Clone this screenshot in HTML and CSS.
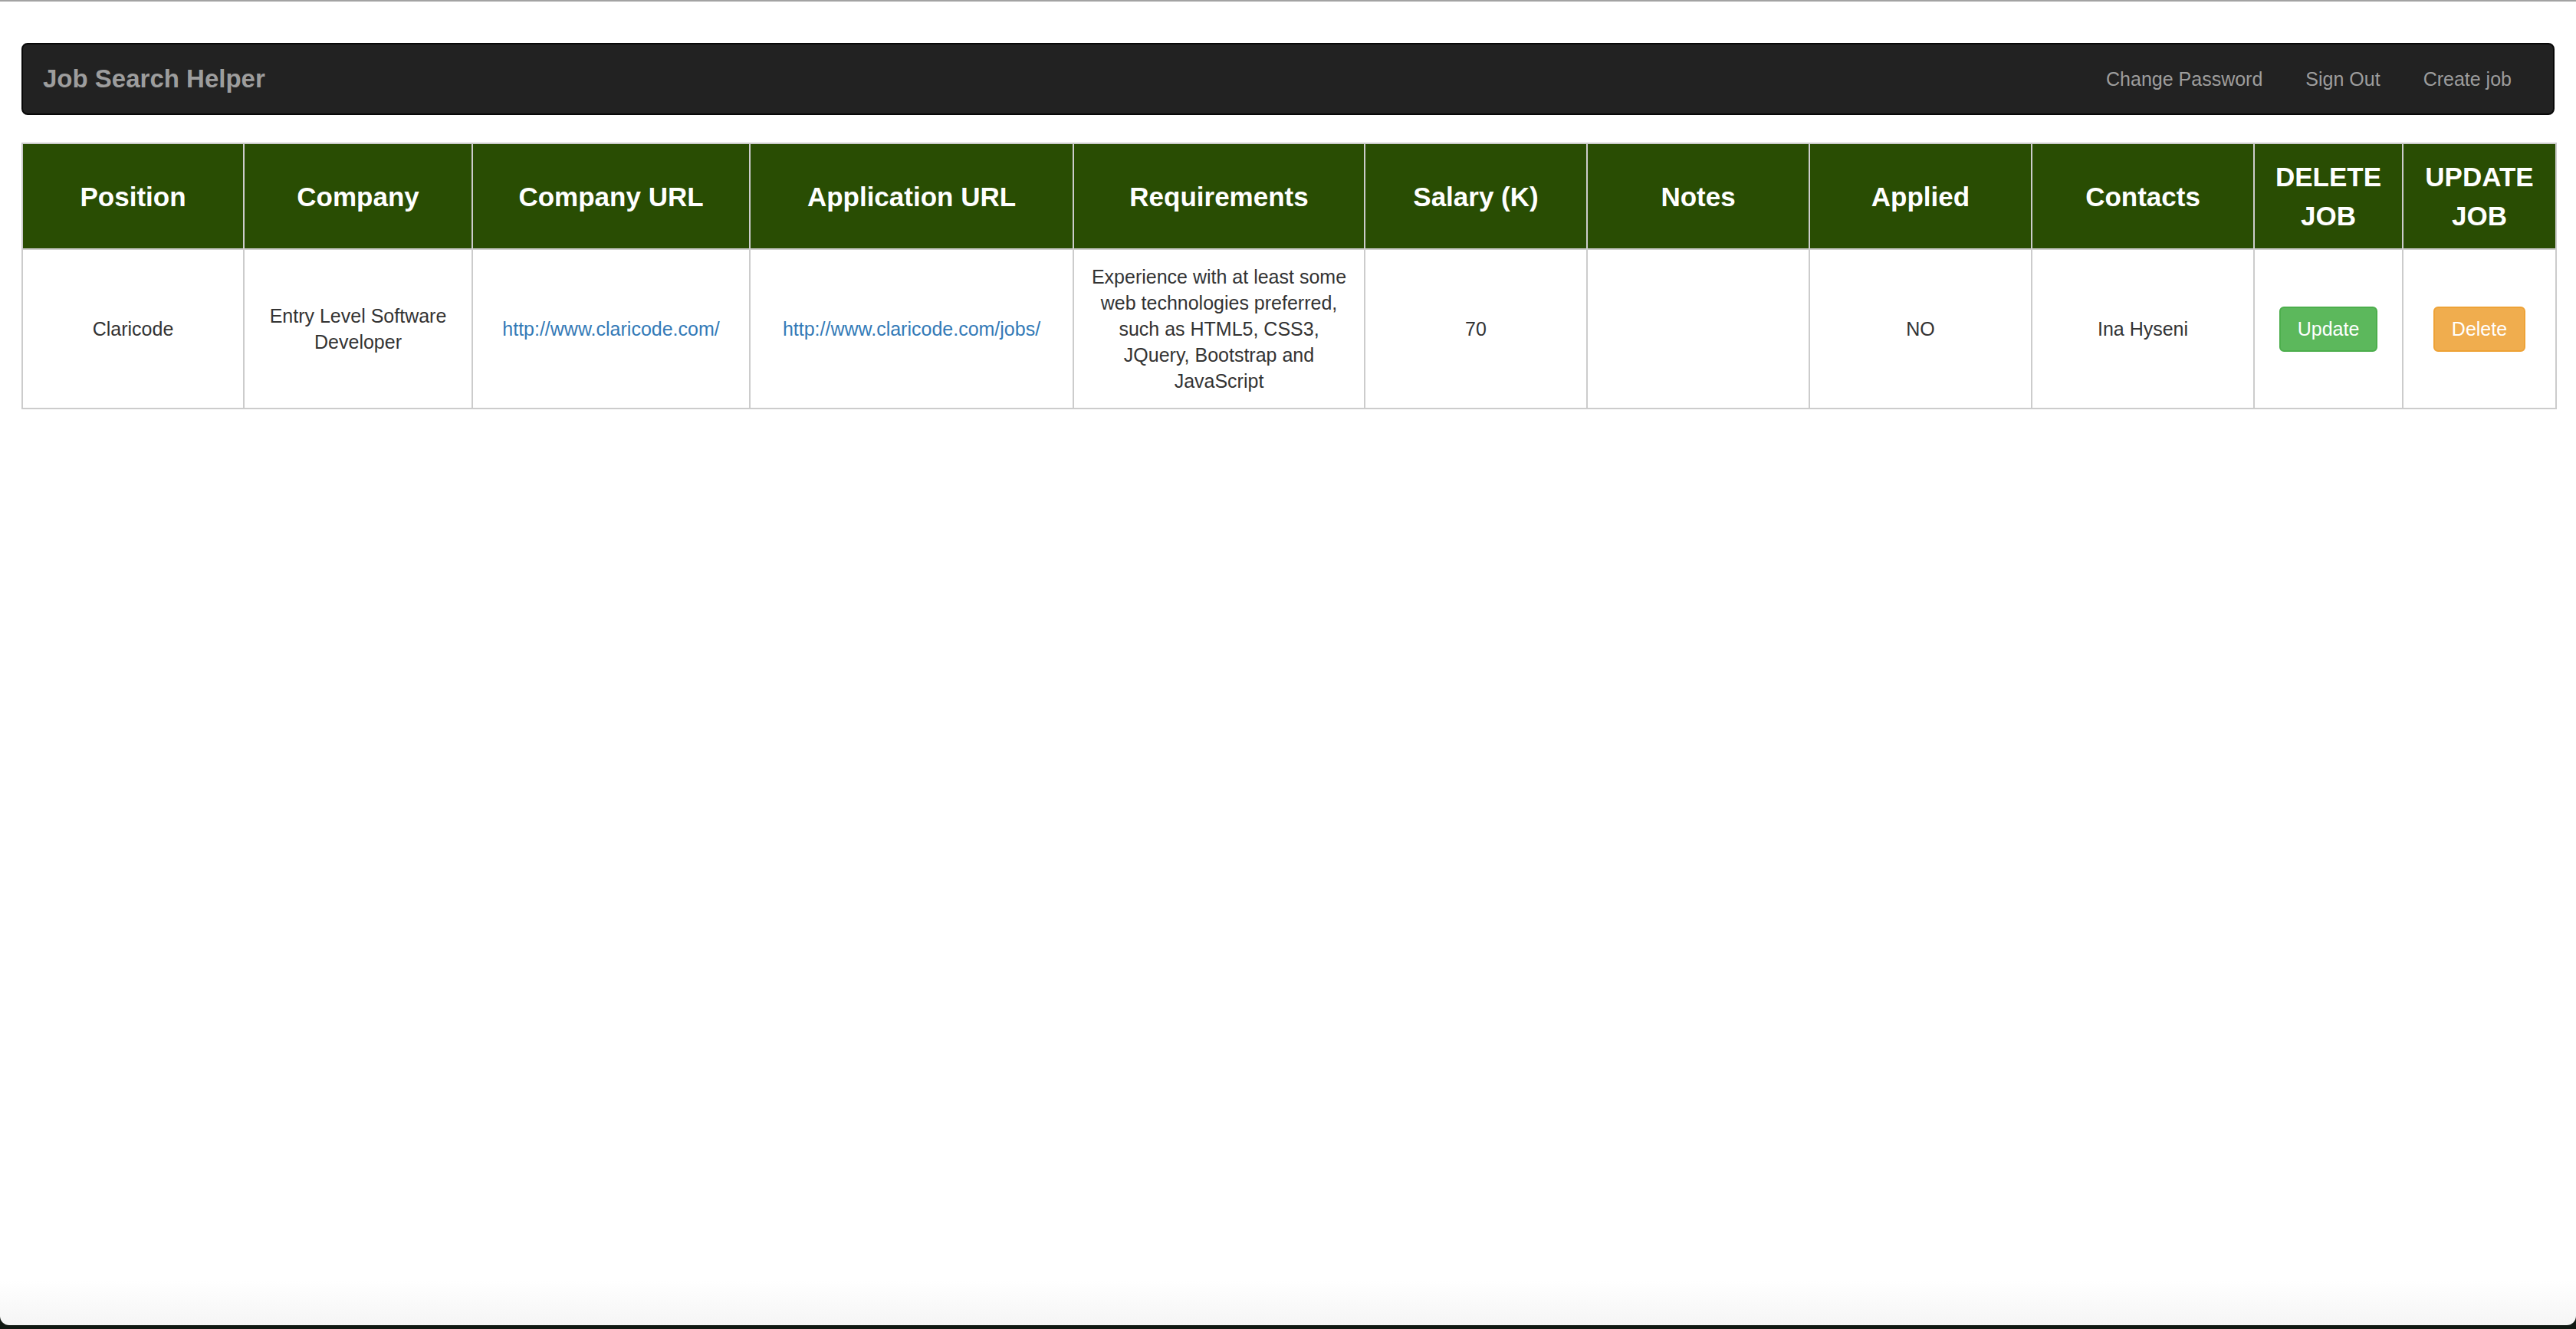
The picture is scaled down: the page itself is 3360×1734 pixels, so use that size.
FILE: index.html
```html
<!DOCTYPE html>
<html lang="en">
<head>
<meta charset="utf-8">
<title>Job Search Helper</title>
<link rel="stylesheet" href="styles.css">
</head>
<body>
<div class="page">
  <nav class="navbar">
    <a class="brand" href="#">Job Search Helper</a>
    <ul class="nav-links">
      <li><a href="#">Change Password</a></li>
      <li><a href="#">Sign Out</a></li>
      <li><a href="#">Create job</a></li>
    </ul>
  </nav>

  <table class="jobs">
    <colgroup>
      <col class="c-position">
      <col class="c-company">
      <col class="c-curl">
      <col class="c-aurl">
      <col class="c-req">
      <col class="c-std">
      <col class="c-std">
      <col class="c-std">
      <col class="c-std">
      <col class="c-del">
      <col class="c-upd">
    </colgroup>
    <thead>
      <tr>
        <th>Position</th>
        <th>Company</th>
        <th>Company URL</th>
        <th>Application URL</th>
        <th>Requirements</th>
        <th>Salary (K)</th>
        <th>Notes</th>
        <th>Applied</th>
        <th>Contacts</th>
        <th>DELETE JOB</th>
        <th>UPDATE JOB</th>
      </tr>
    </thead>
    <tbody>
      <tr>
        <td>Claricode</td>
        <td>Entry Level Software Developer</td>
        <td><a href="#">http://www.claricode.com/</a></td>
        <td><a href="#">http://www.claricode.com/jobs/</a></td>
        <td>Experience with at least some web technologies preferred, such as HTML5, CSS3, JQuery, Bootstrap and JavaScript</td>
        <td>70</td>
        <td></td>
        <td>NO</td>
        <td>Ina Hyseni</td>
        <td><button class="btn btn-success" type="button">Update</button></td>
        <td><button class="btn btn-warning" type="button">Delete</button></td>
      </tr>
    </tbody>
  </table>
</div>
</body>
</html>
```

FILE: styles.css
```css
html {
  background: #111913;
  margin: 0;
  padding: 0;
}

body {
  margin: 0;
  height: 1729px;
  box-sizing: border-box;
  border-top: 2px solid #a3a3a3;
  border-radius: 0 0 12px 12px;
  background: linear-gradient(to bottom, #ffffff 0, #ffffff calc(100% - 58px), #f5f5f5 100%);
  font-family: "Liberation Sans", Arial, Helvetica, sans-serif;
  color: #333333;
}

.page {
  padding: 54px 28px 0 28px;
}

.navbar {
  display: flex;
  align-items: center;
  justify-content: space-between;
  height: 94px;
  box-sizing: border-box;
  background: #222222;
  border: 2px solid #080808;
  border-radius: 8px;
  margin-bottom: 36px;
}

.brand {
  padding-left: 26px;
  font-size: 33px;
  font-weight: bold;
  color: #9d9d9d;
  text-decoration: none;
}

.nav-links {
  display: flex;
  list-style: none;
  margin: 0;
  padding: 0 26px 0 0;
}

.nav-links a {
  display: block;
  padding: 0 28px;
  font-size: 25px;
  color: #9d9d9d;
  text-decoration: none;
}

.jobs {
  width: 100%;
  table-layout: fixed;
  border-collapse: collapse;
  border: 2px solid #cccccc;
}

.c-position { width: 289px; }
.c-company { width: 298px; }
.c-curl { width: 362px; }
.c-aurl { width: 422px; }
.c-req { width: 380px; }
.c-std { width: 290px; }
.c-del { width: 194px; }
.c-upd { width: 200px; }

.jobs th {
  background: #294d03;
  color: #ffffff;
  font-size: 35px;
  font-weight: bold;
  line-height: 51px;
  padding: 17px 16px;
  text-align: center;
  vertical-align: middle;
  border: 2px solid #cccccc;
}

.jobs td {
  font-size: 25px;
  line-height: 34px;
  padding: 18px 16px;
  text-align: center;
  vertical-align: middle;
  border: 2px solid #cccccc;
  color: #333333;
}

.jobs a {
  color: #337ab7;
  text-decoration: none;
}

.btn {
  font-family: "Liberation Sans", Arial, Helvetica, sans-serif;
  font-size: 25px;
  line-height: 35px;
  padding: 10px 22px;
  border-radius: 6px;
  color: #ffffff;
  cursor: pointer;
}

.btn-success {
  background: #5cb85c;
  border: 2px solid #4cae4c;
}

.btn-warning {
  background: #f0ad4e;
  border: 2px solid #eea236;
}
```
